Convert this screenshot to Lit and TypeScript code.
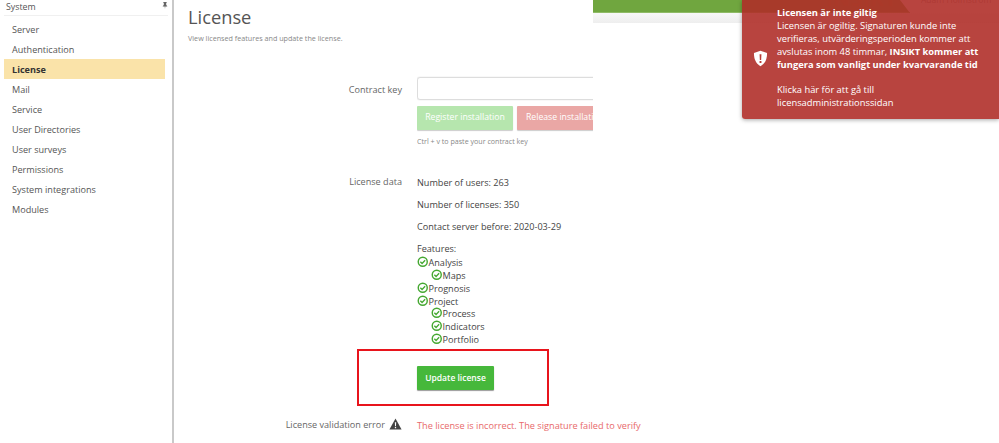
import { LitElement, html, css } from "lit";
import { customElement } from "lit/decorators.js";

const check = html`<svg class="chk" viewBox="0 0 12 12" width="11.500" height="11.500"><circle cx="6" cy="6" r="4.700" fill="none" stroke="#46a832" stroke-width="1.500"/><path d="M3.500 6l1.800 1.800 3.200-3.300" fill="none" stroke="#46a832" stroke-width="1.400"/></svg>`;

@customElement("app-root")
export class AppRoot extends LitElement {
  static styles = css`
    :host { display: block; width: 999px; height: 443px; overflow: hidden; position: relative; background: #fff; font-family: "Open Sans", sans-serif; font-size: 9.1px; color: #444; }
    * { box-sizing: border-box; }
    .page { display: flex; height: 443px; }
    .side { width: 174px; flex: none; border-right: 2px solid #c9c9c9; padding: 0 7px 0 4px; }
    .sys { height: 16px; display: flex; justify-content: space-between; align-items: flex-start; border-bottom: 1px solid #f0f0f0; padding: 1px 0 0 2px; font-size: 8.8px; line-height: 13px; color: #555; margin-right: -3px; }
    .pin { margin-top: 1px; flex: none; }
    .nav { display: flex; flex-direction: column; padding-top: 3px; }
    .nav div { height: 20px; line-height: 21px; padding-left: 8px; color: #555; }
    .nav .on { background: #fae3a9; font-weight: 700; color: #333; }
    .main { width: 419px; flex: none; padding-left: 14px; }
    h1 { margin: 2px 0 0; font-weight: 400; font-size: 18.300px; line-height: 30px; color: #555; }
    .sub { font-size: 7.200px; color: #888; line-height: 10px; margin-top: 1px; }
    .row { display: grid; grid-template-columns: 214px 1fr; column-gap: 15px; }
    .lab { text-align: right; color: #666; white-space: nowrap; }
    .r1 { margin-top: 33px; }
    .r1 .lab { padding-top: 7px; line-height: 14px; }
    .clip { width: 176px; overflow: hidden; padding-top: 1px; }
    .in { width: 200px; height: 23px; border: 1px solid #ddd; border-radius: 3px 0 0 3px; box-shadow: 0 0 1px #bbb; }
    .btns { display: flex; gap: 4px; margin-top: 6px; white-space: nowrap; padding-bottom: 1px; font-size: 8.700px; }
    .b { height: 24px; line-height: 23px; text-align: center; color: #fff; border-radius: 1px; box-shadow: 0 1px 1px #ccc; flex: none; }
    .g { width: 96px; background: #b6e6ae; }
    .rd { width: 96px; background: #eaa7a5; }
    .hint { font-size: 7.100px; color: #888; margin-top: 5px; line-height: 11px; }
    .r2 { margin-top: 28px; }
    .r2 .lab { line-height: 14px; }
    .info p { margin: 0 0 8px; line-height: 14px; color: #444; }
    .info .first { padding-top: 1px; }
    .feat { margin-top: 9px; line-height: 12.900px; }
    .f { display: flex; align-items: flex-start; height: 12.900px; color: #444; }
    .f span { padding-top: 1px; }
    .f.s { padding-left: 14px; }
    .chk { flex: none; }
    .up { margin-top: 20px; width: 77px; background: #46b83b; color: #fff; font-weight: 600; font-size: 8.500px; box-shadow: 0 1px 1px #999; }
    .err { margin-top: 26px; align-items: center; }
    .err .lab { display: flex; justify-content: flex-end; align-items: center; gap: 4px; }
    .err .msg { color: #e8696a; white-space: nowrap; padding-top: 3px; font-size: 9.200px; }
    .mark { position: absolute; left: 357px; top: 349px; width: 192px; height: 57px; border: 2px solid #e8141c; }
    .top { flex: 1; min-width: 0; }
    .bar { height: 13px; position: relative; overflow: hidden; }
    .green { position: absolute; inset: 0 89px 0 0; background: #70a63f; border-bottom: 1px solid #8fbb66; clip-path: polygon(0 0, 307px 0, 317px 100%, 0 100%); }
    .brand { position: absolute; left: 233px; top: -13px; font-size: 20px; font-weight: 700; letter-spacing: 1px; color: #7c9a35; line-height: 24px; }
    .user { position: absolute; left: 328px; top: -6px; font-size: 8.500px; line-height: 12px; color: #999; white-space: nowrap; }
    .shade { height: 10px; background: linear-gradient(#f8f8f8, #eeeeee); }
    .toast { position: absolute; left: 742px; top: 0; width: 257px; height: 119px; background: rgba(175, 45, 39, .89); border-radius: 0 0 0 3px; box-shadow: 0 1px 4px rgba(0,0,0,.35); color: #fff; display: flex; align-items: center; padding: 0 0 2px 11px; gap: 9px; }
    .toast .t { font-size: 9.350px; line-height: 12.800px; white-space: nowrap; }
    .toast b { font-weight: 700; }
    .sp { height: 12.800px; }
  `;
  render() {
    const nav = ["Server","Authentication","License","Mail","Service","User Directories","User surveys","Permissions","System integrations","Modules"];
    return html`
      <div class="page">
        <aside class="side">
          <div class="sys"><span>System</span>
            <svg class="pin" viewBox="0 0 6 7" width="6" height="7"><path d="M1.300 0h3.400v.7l-.5.4v2l1 .9v.6H3.300L3 7l-.3-2.400H.8V4l1-.9v-2l-.5-.4z" fill="#666"/></svg>
          </div>
          <div class="nav">${nav.map(n => html`<div class=${n === "License" ? "on" : ""}>${n}</div>`)}</div>
        </aside>
        <main class="main">
          <h1>License</h1>
          <div class="sub">View licensed features and update the license.</div>
          <div class="row r1">
            <div class="lab">Contract key</div>
            <div class="clip">
              <div class="in"></div>
              <div class="btns"><div class="b g">Register installation</div><div class="b rd">Release installation</div></div>
              <div class="hint">Ctrl + v to paste your contract key</div>
            </div>
          </div>
          <div class="row r2">
            <div class="lab">License data</div>
            <div class="info">
              <p class="first">Number of users: 263</p>
              <p>Number of licenses: 350</p>
              <p>Contact server before: 2020-03-29</p>
              <div class="feat">
                <div>Features:</div>
                <div class="f">${check}<span>Analysis</span></div>
                <div class="f s">${check}<span>Maps</span></div>
                <div class="f">${check}<span>Prognosis</span></div>
                <div class="f">${check}<span>Project</span></div>
                <div class="f s">${check}<span>Process</span></div>
                <div class="f s">${check}<span>Indicators</span></div>
                <div class="f s">${check}<span>Portfolio</span></div>
              </div>
              <div class="b up">Update license</div>
            </div>
          </div>
          <div class="row err">
            <div class="lab">License validation error
              <svg viewBox="0 0 14 13" width="13" height="12"><path d="M7 .6L13.600 12.400H.4z" fill="#444"/><path d="M6.300 4.500h1.400l-.2 4.400h-1zM6.300 9.700h1.400v1.300H6.300z" fill="#fff"/></svg>
            </div>
            <div class="msg">The license is incorrect. The signature failed to verify</div>
          </div>
        </main>
        <div class="top">
          <div class="bar">
            <div class="green"><span class="brand">INSIKT</span></div>
            <span class="user">Adam Holmström</span>
          </div>
          <div class="shade"></div>
        </div>
      </div>
      <div class="mark"></div>
      <div class="toast">
        <svg viewBox="0 0 16 18" width="15" height="17" style="flex:none"><path d="M8 .8L15 3.200c0 6-1.600 11-7 14C2.600 14.200 1 9.200 1 3.200z" fill="#fff"/><path d="M7 4.500h2l-.3 6h-1.400zM7 11.700h2v2H7z" fill="#b83c36"/></svg>
        <div class="t">
          <b>Licensen är inte giltig</b><br>
          Licensen är ogiltig. Signaturen kunde inte<br>verifieras, utvärderingsperioden kommer att<br>avslutas inom 48 timmar, <b>INSIKT kommer att<br>fungera som vanligt under kvarvarande tid</b>
          <div class="sp"></div>
          Klicka här för att gå till<br>licensadministrationssidan
        </div>
      </div>
    `;
  }
}
